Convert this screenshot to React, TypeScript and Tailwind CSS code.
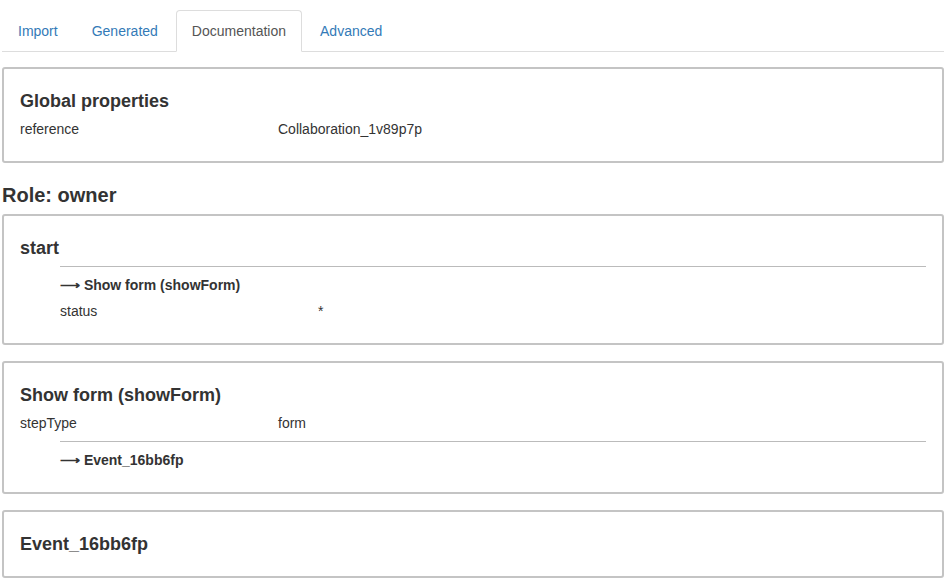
import React from 'react'

const tabs = ['Import', 'Generated', 'Documentation', 'Advanced']

function Row({ label, value }: { label: string; value: string }) {
  return (
    <div className="flex leading-5">
      <div className="w-[258px] shrink-0">{label}</div>
      <div>{value}</div>
    </div>
  )
}

function Link({ text }: { text: string }) {
  return (
    <div className="ml-10">
      <div className="my-2 border-t border-[#bbb]" />
      <div className="font-bold leading-5">⟶ {text}</div>
    </div>
  )
}

function Card({ title, children }: { title: string; children?: React.ReactNode }) {
  return (
    <div className="rounded-[3px] border-2 border-[#c4c4c4] px-4 pb-[22px] pt-[22px]">
      <h3 className="text-[18px] font-bold leading-5">{title}</h3>
      {children && <div className="mt-2">{children}</div>}
    </div>
  )
}

export default function App() {
  return (
    <div
      className="bg-white px-[2px] pt-[10px] text-[14px] text-[#333]"
      style={{ fontFamily: '"Liberation Sans", Arial, sans-serif' }}
    >
      <div className="flex border-b border-[#ddd]">
        {tabs.map((t) => (
          <div
            key={t}
            className={`-mb-px mr-[2px] rounded-t-[4px] border px-[15px] py-[10px] leading-5 ${
              t === 'Documentation'
                ? 'border-[#ddd] border-b-white bg-white text-[#555]'
                : 'border-transparent text-[#337ab7]'
            }`}
          >
            {t}
          </div>
        ))}
      </div>

      <div className="mt-[15px]">
        <Card title="Global properties">
          <Row label="reference" value="Collaboration_1v89p7p" />
        </Card>
      </div>

      <h2 className="mb-[7px] mt-5 text-[20px] font-bold leading-6">Role: owner</h2>

      <div className="flex flex-col gap-4">
        <Card title="start">
          <Link text="Show form (showForm)" />
          <div className="ml-10 mt-[6px]">
            <Row label="status" value="*" />
          </div>
        </Card>
        <Card title="Show form (showForm)">
          <Row label="stepType" value="form" />
          <Link text="Event_16bb6fp" />
        </Card>
        <Card title="Event_16bb6fp" />
      </div>
    </div>
  )
}
